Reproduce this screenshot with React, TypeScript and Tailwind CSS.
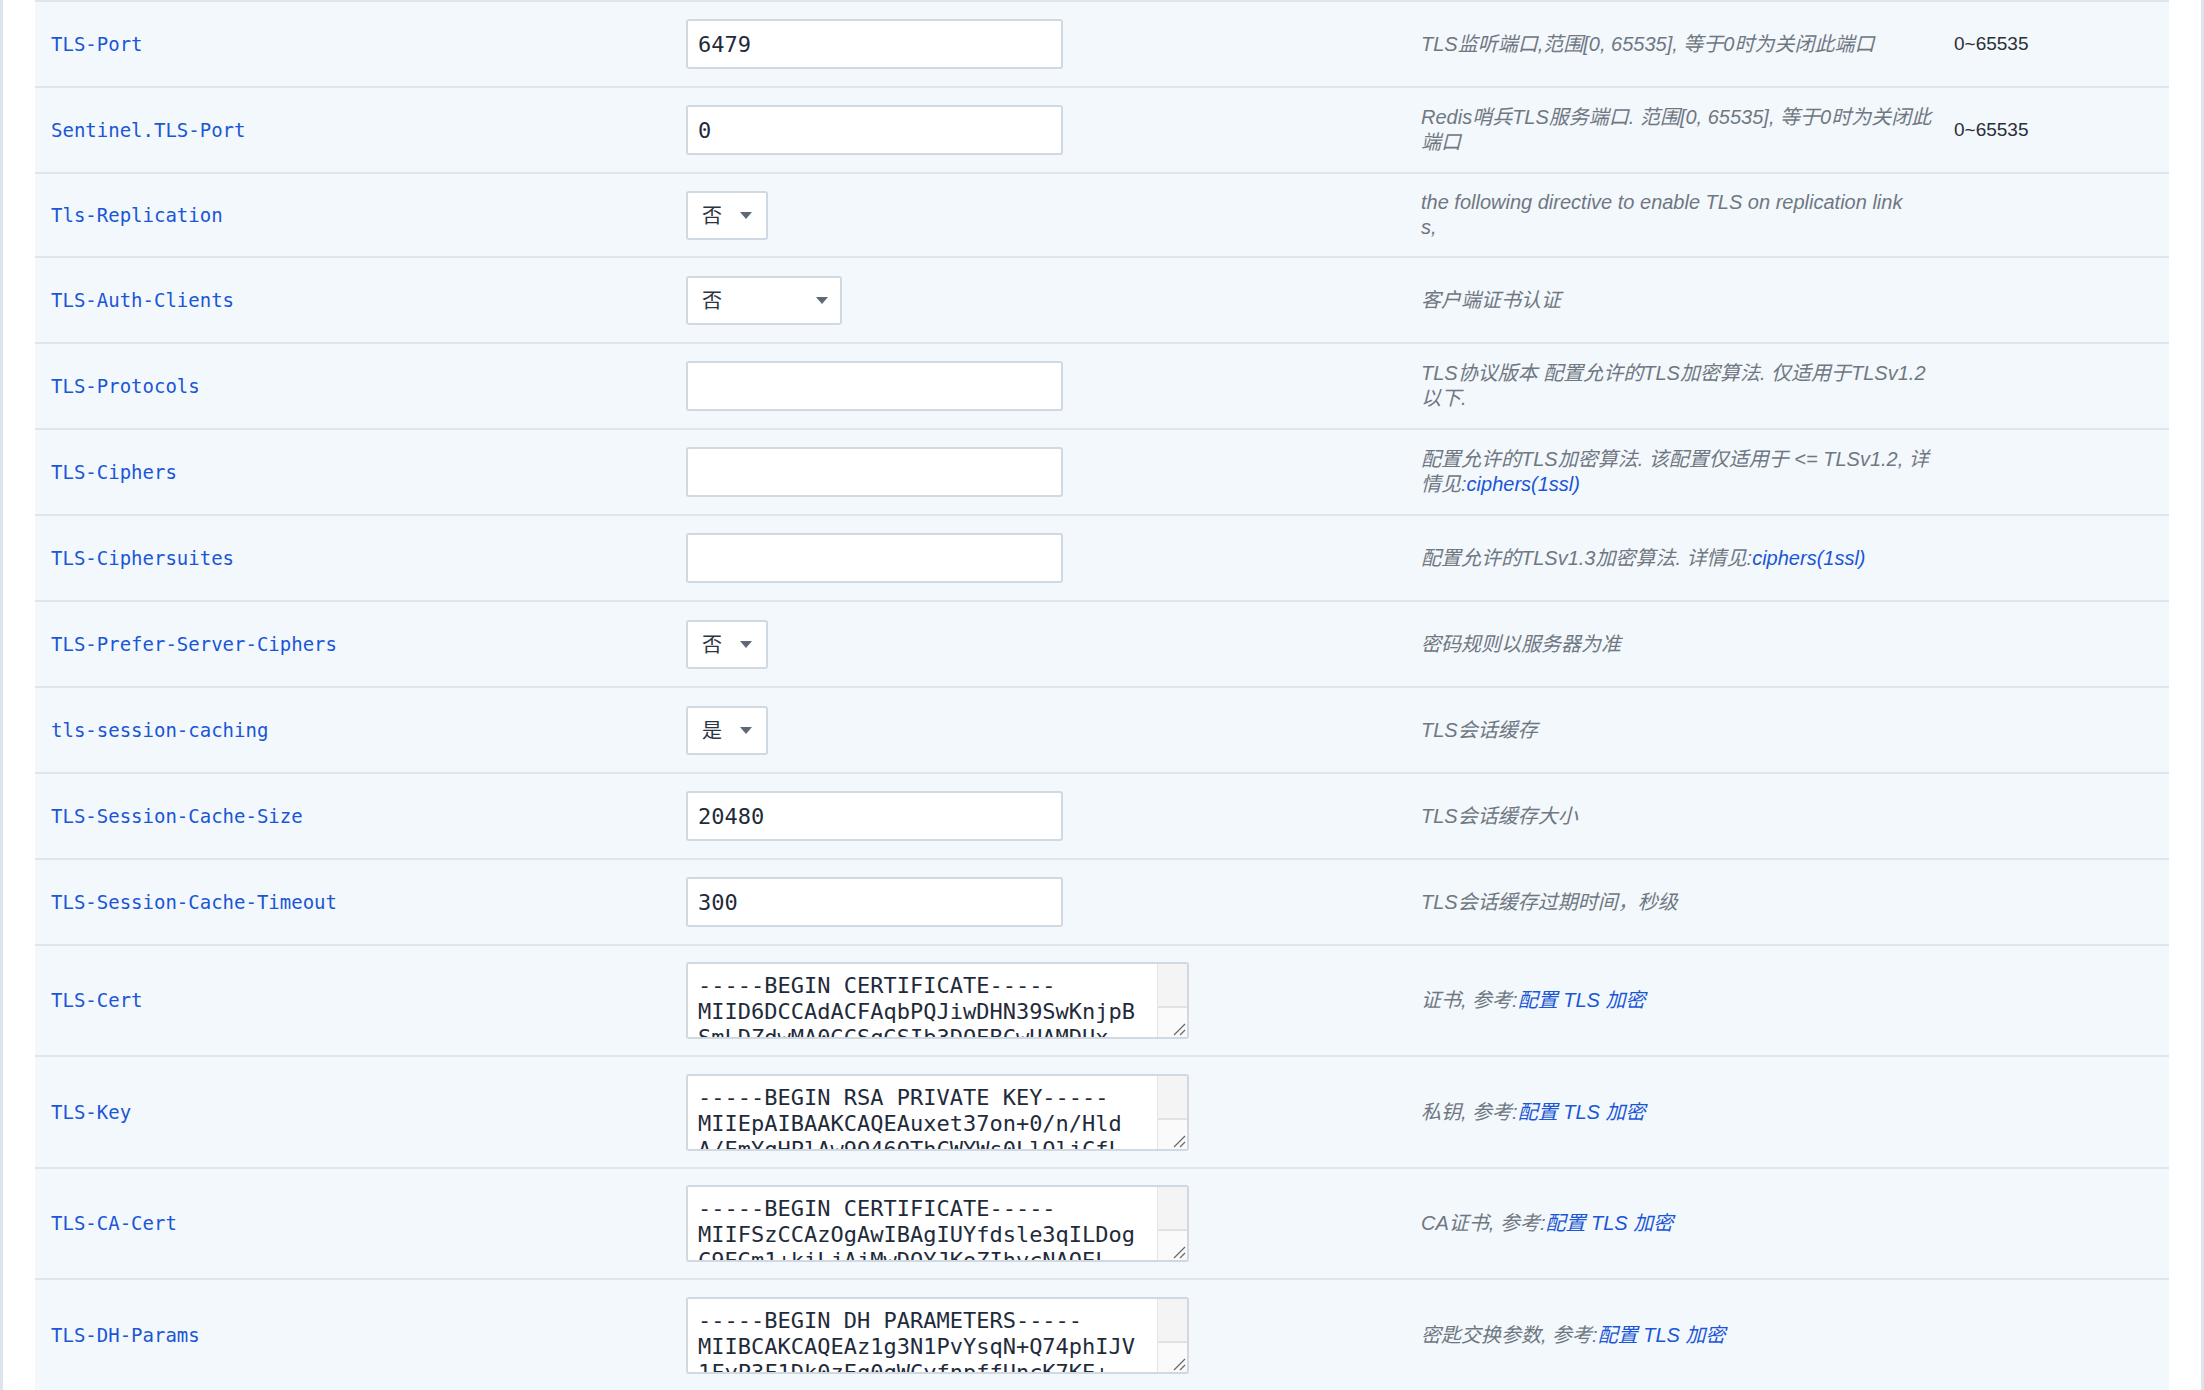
import React from "react"

type Kind = "input" | "select" | "selectWide" | "textarea"

type Row = {
  label: string
  kind: Kind
  value?: string
  lines?: string[]
  desc: React.ReactNode
  range?: string
  h: string
}

const Link = ({ children }: { children: React.ReactNode }) => (
  <span className="text-[#1a56d6]">{children}</span>
)

const rows: Row[] = [
  {
    label: "TLS-Port",
    kind: "input",
    value: "6479",
    desc: <>TLS监听端口,范围[0, 65535], 等于0时为关闭此端口</>,
    range: "0~65535",
    h: "h-[86px]",
  },
  {
    label: "Sentinel.TLS-Port",
    kind: "input",
    value: "0",
    desc: (
      <>
        Redis哨兵TLS服务端口. 范围[0, 65535], 等于0时为关闭此
        <br />
        端口
      </>
    ),
    range: "0~65535",
    h: "h-[86px]",
  },
  {
    label: "Tls-Replication",
    kind: "select",
    value: "否",
    desc: (
      <>
        the following directive to enable TLS on replication link
        <br />
        s,
      </>
    ),
    h: "h-[84px]",
  },
  { label: "TLS-Auth-Clients", kind: "selectWide", value: "否", desc: <>客户端证书认证</>, h: "h-[86px]" },
  {
    label: "TLS-Protocols",
    kind: "input",
    value: "",
    desc: (
      <>
        TLS协议版本 配置允许的TLS加密算法. 仅适用于TLSv1.2
        <br />
        以下.
      </>
    ),
    h: "h-[86px]",
  },
  {
    label: "TLS-Ciphers",
    kind: "input",
    value: "",
    desc: (
      <>
        配置允许的TLS加密算法. 该配置仅适用于 &lt;= TLSv1.2, 详
        <br />
        情见:<Link>ciphers(1ssl)</Link>
      </>
    ),
    h: "h-[86px]",
  },
  {
    label: "TLS-Ciphersuites",
    kind: "input",
    value: "",
    desc: (
      <>
        配置允许的TLSv1.3加密算法. 详情见:<Link>ciphers(1ssl)</Link>
      </>
    ),
    h: "h-[86px]",
  },
  { label: "TLS-Prefer-Server-Ciphers", kind: "select", value: "否", desc: <>密码规则以服务器为准</>, h: "h-[86px]" },
  { label: "tls-session-caching", kind: "select", value: "是", desc: <>TLS会话缓存</>, h: "h-[86px]" },
  { label: "TLS-Session-Cache-Size", kind: "input", value: "20480", desc: <>TLS会话缓存大小</>, h: "h-[86px]" },
  { label: "TLS-Session-Cache-Timeout", kind: "input", value: "300", desc: <>TLS会话缓存过期时间，秒级</>, h: "h-[86px]" },
  {
    label: "TLS-Cert",
    kind: "textarea",
    lines: ["-----BEGIN CERTIFICATE-----", "MIID6DCCAdACFAqbPQJiwDHN39SwKnjpB", "SmLDZdwMA0GCSqGSIb3DQEBCwUAMDUx"],
    desc: (
      <>
        证书, 参考:<Link>配置 TLS 加密</Link>
      </>
    ),
    h: "h-[111px]",
  },
  {
    label: "TLS-Key",
    kind: "textarea",
    lines: ["-----BEGIN RSA PRIVATE KEY-----", "MIIEpAIBAAKCAQEAuxet37on+0/n/Hld", "A/EmYqHPlAw9O46OThCWYWs0LlOljCfL"],
    desc: (
      <>
        私钥, 参考:<Link>配置 TLS 加密</Link>
      </>
    ),
    h: "h-[112px]",
  },
  {
    label: "TLS-CA-Cert",
    kind: "textarea",
    lines: ["-----BEGIN CERTIFICATE-----", "MIIFSzCCAzOgAwIBAgIUYfdsle3qILDog", "C9EGm1+kiLjAjMwDQYJKoZIhvcNAQEL"],
    desc: (
      <>
        CA证书, 参考:<Link>配置 TLS 加密</Link>
      </>
    ),
    h: "h-[111px]",
  },
  {
    label: "TLS-DH-Params",
    kind: "textarea",
    lines: ["-----BEGIN DH PARAMETERS-----", "MIIBCAKCAQEAz1g3N1PvYsqN+Q74phIJV", "1FyP3F1Dk0zEq0qWCyfnpffUncK7KE+"],
    desc: (
      <>
        密匙交换参数, 参考:<Link>配置 TLS 加密</Link>
      </>
    ),
    h: "h-[112px]",
  },
]

function Caret() {
  return (
    <svg width="12" height="7" viewBox="0 0 12 7">
      <polygon points="0,0 12,0 6,7" fill="#5d6977" />
    </svg>
  )
}

function Field({ row }: { row: Row }) {
  if (row.kind === "input") {
    return (
      <div className="flex h-[50px] w-[377px] items-center rounded-[3px] border-2 border-[#d0d8e2] bg-white pl-[10px] font-['DejaVu_Sans_Mono',monospace] text-[22px] text-[#1f2b3a]">
        {row.value}
      </div>
    )
  }
  if (row.kind === "select" || row.kind === "selectWide") {
    const wide = row.kind === "selectWide"
    return (
      <div
        className={`flex h-[49px] items-center justify-between rounded-[3px] border-2 border-[#d0d8e2] bg-white pl-[14px] font-['Noto_Sans_CJK_SC',sans-serif] text-[20px] text-[#2b3440] ${
          wide ? "w-[156px] pr-[12px]" : "w-[82px] pr-[14px]"
        }`}
      >
        <span>{row.value}</span>
        <Caret />
      </div>
    )
  }
  return (
    <div className="flex h-[77px] w-[503px] overflow-hidden rounded-[3px] border-2 border-[#d0d8e2] bg-white">
      <div className="flex-1 overflow-hidden pl-[10px] pt-[9px] font-['DejaVu_Sans_Mono',monospace] text-[22px] leading-[26px] text-[#1f2b3a]">
        {row.lines?.map((l, i) => (
          <div key={i} className="whitespace-pre">
            {l}
          </div>
        ))}
      </div>
      <div className="flex w-[30px] shrink-0 flex-col border-l border-[#e4e4e4] bg-[#fafafa]">
        <div className="h-[44px] border-b-2 border-[#e2e2e2] bg-[#f4f4f4]" />
        <div className="flex flex-1 items-end justify-end pb-[1px] pr-[1px]">
          <svg width="14" height="14" viewBox="0 0 14 14">
            <line x1="13" y1="2" x2="2" y2="13" stroke="#6a6a6a" strokeWidth="1.3" />
            <line x1="13" y1="8" x2="8" y2="13" stroke="#6a6a6a" strokeWidth="1.3" />
          </svg>
        </div>
      </div>
    </div>
  )
}

export default function App() {
  return (
    <div className="flex min-h-screen bg-white">
      <div className="w-[3px] shrink-0 bg-[#dde4ec]" />
      <div className="flex-1 px-[32px]">
        <div className="border-b-2 border-[#dde5ed]">
          {rows.map(row => (
            <div
              key={row.label}
              className={`grid grid-cols-[651px_735px_533px_1fr] items-center border-t-2 border-[#dde5ed] bg-[#f3f8fc] ${row.h}`}
            >
              <div className="pl-[16px] font-['DejaVu_Sans_Mono',monospace] text-[19px] text-[#1a56d6]">
                {row.label}
              </div>
              <div>
                <Field row={row} />
              </div>
              <div className="whitespace-nowrap font-['Liberation_Sans','Noto_Sans_CJK_SC',sans-serif] text-[20px] italic leading-[25px] text-[#6f7782]">
                {row.desc}
              </div>
              <div className="font-['Liberation_Sans',sans-serif] text-[19px] text-[#2b2f36]">{row.range}</div>
            </div>
          ))}
        </div>
      </div>
      <div className="w-[3px] shrink-0 bg-[#dde4ec]" />
    </div>
  )
}
